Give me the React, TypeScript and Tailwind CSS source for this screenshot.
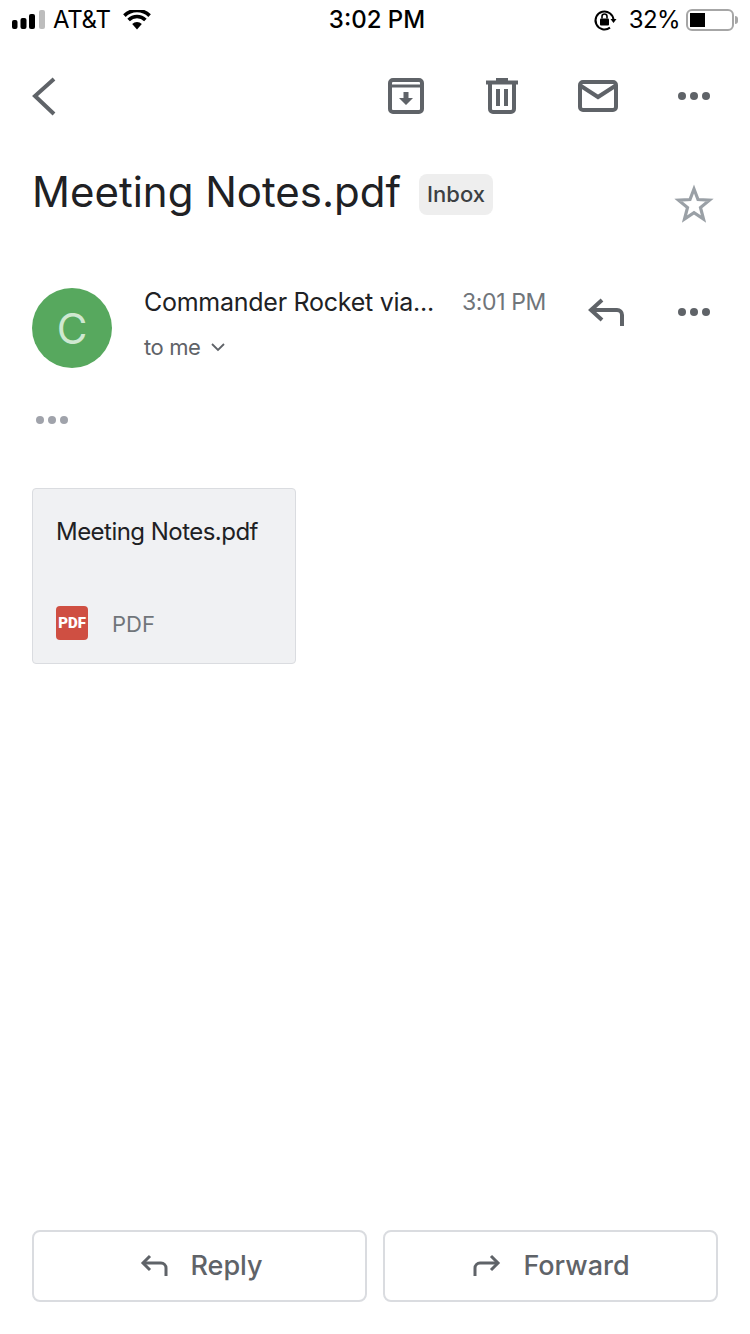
import React from 'react';

function Dots({ color = '#5f6368' }: { color?: string }) {
  return (
    <svg width="36" height="10" viewBox="0 0 36 10" fill={color}>
      <circle cx="6" cy="5" r="4" />
      <circle cx="18" cy="5" r="4" />
      <circle cx="30" cy="5" r="4" />
    </svg>
  );
}

function StatusBar() {
  return (
    <div className="flex h-[40px] shrink-0 items-center justify-between px-[12px] text-[24px] text-black">
      <div className="flex w-[244px] items-center">
        <svg width="34" height="20" viewBox="0 0 34 20">
          <rect x="0" y="10" width="5.5" height="9" rx="2" fill="#000" />
          <rect x="8.5" y="8" width="6" height="11" rx="2" fill="#000" />
          <rect x="17" y="4" width="6" height="15" rx="2" fill="#000" />
          <rect x="27" y="0" width="6" height="19" rx="2" fill="#bdbdbd" />
        </svg>
        <span className="ml-[7px] tracking-[-0.3px]">AT&amp;T</span>
        <svg className="ml-[12px]" width="28" height="20" viewBox="0 0 28 20" fill="none">
          <path d="M14 19.5 L9.2 14 A7 7 0 0 1 18.8 14 Z" fill="#000" />
          <path d="M5.6 10 A12 12 0 0 1 22.4 10" stroke="#000" strokeWidth="3.6" />
          <path d="M1.4 5.6 A18 18 0 0 1 26.6 5.6" stroke="#000" strokeWidth="3.6" />
        </svg>
      </div>
      <span className="font-medium">3:02 PM</span>
      <div className="flex w-[240px] items-center justify-end">
        <svg width="24" height="24" viewBox="0 0 24 24" fill="none">
          <path d="M20.5 12 A9 9 0 1 0 17 19.6" stroke="#000" strokeWidth="2" />
          <path d="M17.5 11 L23.5 11 L20.5 15 Z" fill="#000" />
          <rect x="7" y="10.5" width="9" height="7" rx="1" fill="#000" />
          <path d="M9 10.5 V8.5 A2.5 2.5 0 0 1 14 8.5 V10.5" stroke="#000" strokeWidth="1.6" />
        </svg>
        <span className="ml-[12px] tracking-[-0.6px]">32%</span>
        <div className="ml-[6px] flex h-[22px] w-[48px] items-center rounded-[6px] border-2 border-[#a6a6a6] p-[2px]">
          <div className="h-[14px] w-[15px] bg-black" />
        </div>
        <div className="ml-[1px] h-[8px] w-[3px] rounded-r-full bg-[#a6a6a6]" />
      </div>
    </div>
  );
}

function Toolbar() {
  return (
    <div className="flex h-[112px] shrink-0 items-center pl-[30px] pr-[8px]">
      <svg width="28" height="40" viewBox="0 0 28 40" fill="none">
        <path d="M24 3 L5 20 L24 38" stroke="#5f6368" strokeWidth="4" />
      </svg>
      <div className="ml-auto flex">
        <div className="flex w-[96px] justify-center">
          <svg width="36" height="36" viewBox="0 0 36 36" fill="none">
            <rect x="2" y="2" width="32" height="32" rx="3" stroke="#5f6368" strokeWidth="4" />
            <path d="M2 8 H34" stroke="#5f6368" strokeWidth="3" />
            <path d="M15.5 14 H20.5 V20 H25 L18 27 L11 20 H15.5 Z" fill="#5f6368" />
          </svg>
        </div>
        <div className="flex w-[96px] justify-center">
          <svg width="32" height="36" viewBox="0 0 32 36" fill="none">
            <path d="M0 4.5 H32" stroke="#5f6368" strokeWidth="4" />
            <path d="M10 1.5 H22" stroke="#5f6368" strokeWidth="3" />
            <path d="M4 6 V31 A3 3 0 0 0 7 34 H25 A3 3 0 0 0 28 31 V6" stroke="#5f6368" strokeWidth="4" />
            <path d="M12 11 V28 M20 11 V28" stroke="#5f6368" strokeWidth="4" />
          </svg>
        </div>
        <div className="flex w-[96px] justify-center">
          <svg className="mt-[2px]" width="40" height="32" viewBox="0 0 40 32" fill="none">
            <rect x="2" y="2" width="36" height="28" rx="3" stroke="#5f6368" strokeWidth="4" />
            <path d="M3 6 L20 17 L37 6" stroke="#5f6368" strokeWidth="4" />
          </svg>
        </div>
        <div className="flex w-[96px] items-center justify-center">
          <Dots />
        </div>
      </div>
    </div>
  );
}

export default function App() {
  return (
    <div className="flex h-[1334px] w-[750px] flex-col overflow-hidden bg-white font-['Inter',sans-serif]">
      <StatusBar />
      <Toolbar />

      <div className="flex h-[136px] shrink-0 pl-[32px] pr-[36px]">
        <h1 className="mt-[11px] text-[42px] leading-[58px] font-normal text-[#202124]">Meeting Notes.pdf</h1>
        <span className="mt-[22px] ml-[18px] flex h-[41px] items-center self-start rounded-[8px] bg-[#eeeeee] px-[8px] text-[22px] font-medium text-[#3c4043]">
          Inbox
        </span>
        <svg className="mt-[32px] ml-auto" width="40" height="40" viewBox="0 0 40 40" fill="none">
          <path
            d="M20 5 L24 15.5 L35.5 16.2 L26.5 23.6 L29.5 35 L20 28.6 L10.5 35 L13.5 23.6 L4.5 16.2 L16 15.5 Z"
            stroke="#9aa0a6"
            strokeWidth="3.2"
          />
        </svg>
      </div>

      <div className="flex shrink-0 pl-[32px] pr-[8px]">
        <div className="flex h-[80px] w-[80px] items-center justify-center rounded-full bg-[#57a85e] text-[42px] text-[#cfe8d1]">
          C
        </div>
        <div className="ml-[32px] flex-1">
          <div className="flex items-center">
            <span className="mt-[-3px] w-[318px] text-[25px] leading-[34px] tracking-[-0.26px] text-[#202124]">Commander Rocket via...</span>
            <span className="mt-[-3px] text-[23px] leading-[32px] tracking-[-0.4px] text-[#70757a]">3:01 PM</span>
          </div>
          <div className="mt-[12px] flex items-center text-[22px] leading-[32px] tracking-[-0.4px] text-[#5f6368]">
            to me
            <svg className="ml-[11px]" width="14" height="10" viewBox="0 0 14 10" fill="none">
              <path d="M1 2 L7 8 L13 2" stroke="#5f6368" strokeWidth="1.8" />
            </svg>
          </div>
        </div>
        <div className="mt-[10px] flex w-[80px] justify-center self-start">
          <svg width="36" height="28" viewBox="0 0 36 28" fill="none">
            <path d="M14 2 L3 12 L14 22" stroke="#5f6368" strokeWidth="4" />
            <path d="M3 12 H29 A5 5 0 0 1 34 17 V28" stroke="#5f6368" strokeWidth="4" />
          </svg>
        </div>
        <div className="mt-[19px] flex w-[96px] justify-center self-start">
          <Dots />
        </div>
      </div>

      <div className="mt-[47px] ml-[34px] shrink-0">
        <Dots color="#a0a3ab" />
      </div>

      <div className="mt-[63px] ml-[32px] flex h-[176px] w-[264px] shrink-0 flex-col rounded-[4px] border border-[#dadce0] bg-[#f0f1f3] pl-[23px]">
        <p className="mt-[26px] text-[24px] leading-[34px] tracking-[-0.53px] text-[#202124]">Meeting Notes.pdf</p>
        <div className="mt-auto mb-[22px] flex items-center">
          <div className="flex h-[34px] w-[32px] items-center justify-center rounded-[4px] bg-[#cf4f42] font-['Roboto',sans-serif] text-[15px] leading-none font-black text-white">
            PDF
          </div>
          <span className="mt-[2px] ml-[24px] text-[22px] leading-[34px] text-[#70757a]">PDF</span>
        </div>
      </div>

      <div className="mt-auto mb-[32px] flex shrink-0 gap-[16px] px-[32px]">
        <button className="flex h-[72px] w-[335px] items-center justify-center rounded-[8px] border-2 border-[#dadce0] pl-[4px] text-[27px] font-medium text-[#5f6368]">
          <svg width="28" height="24" viewBox="0 0 28 24" fill="none">
            <path d="M10 2 L3 9 L10 16" stroke="#5f6368" strokeWidth="3" />
            <path d="M3 9 H21 A5 5 0 0 1 26 14 V22" stroke="#5f6368" strokeWidth="3" />
          </svg>
          <span className="ml-[22px]">Reply</span>
        </button>
        <button className="flex h-[72px] w-[335px] items-center justify-center rounded-[8px] border-2 border-[#dadce0] pl-[2px] text-[27px] font-medium text-[#5f6368]">
          <svg width="28" height="24" viewBox="0 0 28 24" fill="none">
            <path d="M18 2 L25 9 L18 16" stroke="#5f6368" strokeWidth="3" />
            <path d="M25 9 H7 A5 5 0 0 0 2 14 V22" stroke="#5f6368" strokeWidth="3" />
          </svg>
          <span className="ml-[22px]">Forward</span>
        </button>
      </div>
    </div>
  );
}
